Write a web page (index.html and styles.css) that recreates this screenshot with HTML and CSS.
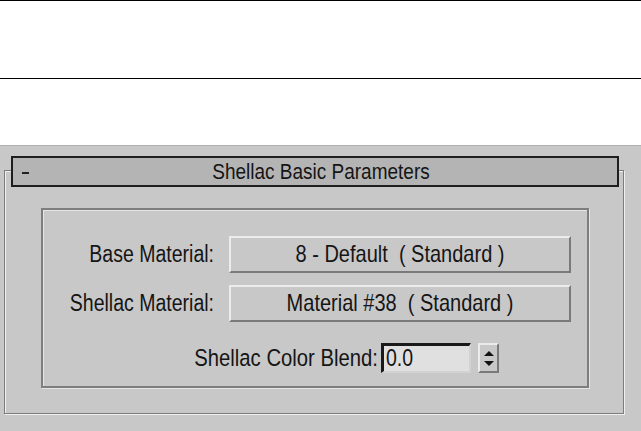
FILE: index.html
```html
<!DOCTYPE html>
<html>
<head>
<meta charset="utf-8">
<link rel="stylesheet" href="styles.css">
</head>
<body>
<div class="page">
  <div class="rule rule-top"></div>
  <div class="blank"></div>
  <div class="rule"></div>
  <div class="gap"></div>
  <div class="panel">
    <div class="rollout-head">
      <span class="minus"></span>
      <span class="title txt">Shellac Basic Parameters</span>
    </div>
    <div class="frame">
      <div class="group">
        <div class="row">
          <span class="label txt">Base Material:</span>
          <div class="btn"><span class="txt">8 - Default&nbsp; ( Standard )</span></div>
        </div>
        <div class="row row2">
          <span class="label txt">Shellac Material:</span>
          <div class="btn"><span class="txt">Material #38&nbsp; ( Standard )</span></div>
        </div>
        <div class="row row3">
          <span class="label txt">Shellac Color Blend:</span>
          <div class="field"><span class="txt">0.0</span></div>
          <div class="spinner">
            <span class="arr up"></span>
            <span class="arr down"></span>
          </div>
        </div>
      </div>
    </div>
  </div>
</div>
</body>
</html>
```

FILE: styles.css
```css
html, body {
  margin: 0;
  padding: 0;
  background: #ffffff;
}
.page {
  width: 641px;
  height: 431px;
  overflow: hidden;
  font-family: "Liberation Sans", Arial, sans-serif;
  color: #151515;
}
.txt {
  display: inline-block;
  transform: scaleY(1.18);
}
.rule {
  height: 0;
  border-top: 1px solid #000;
}
.blank { height: 77px; }
.gap { height: 66px; }
.panel {
  background: #c8c8c8;
  border-top: 1px solid #b0b0b0;
  height: 286px;
  box-sizing: border-box;
  padding: 10px 0 0 4px;
}
.rollout-head {
  position: relative;
  z-index: 1;
  margin-left: 7px;
  width: 608px;
  height: 31px;
  box-sizing: border-box;
  border: 2px solid #1e1e1e;
  background: #b4b4b4;
  display: flex;
  align-items: center;
  justify-content: center;
}
.minus {
  position: absolute;
  left: 9px;
  top: 14px;
  width: 7px;
  height: 2px;
  background: #222;
}
.title {
  font-size: 19px;
  margin-left: 12px;
}
.frame {
  margin-top: -17px;
  width: 620px;
  height: 244px;
  box-sizing: border-box;
  border: 1px solid #7c7c7c;
  box-shadow: inset 1px 1px 0 #f0f0f0, 1px 1px 0 #f0f0f0;
  padding: 37px 0 0 36px;
}
.group {
  width: 548px;
  height: 180px;
  box-sizing: border-box;
  border: 2px solid #7e7e7e;
  box-shadow: inset 1px 1px 0 #e4e4e4, 1px 1px 0 #e4e4e4;
  padding-top: 26px;
}
.row {
  display: flex;
  justify-content: flex-end;
  align-items: center;
  padding-right: 16px;
}
.row2 { margin-top: 12px; }
.row3 {
  margin-top: 21px;
  padding-right: 88px;
}
.label {
  font-size: 19.5px;
  margin-right: 15px;
}
.row3 .label {
  font-size: 20.3px;
  margin-right: 3px;
}
.btn {
  width: 342px;
  height: 37px;
  box-sizing: border-box;
  border-top: 2px solid #ececec;
  border-left: 2px solid #ececec;
  border-right: 2px solid #7a7a7a;
  border-bottom: 2px solid #7a7a7a;
  background: #c8c8c8;
  display: flex;
  align-items: center;
  justify-content: center;
  font-size: 20px;
}
.field {
  width: 90px;
  height: 30px;
  box-sizing: border-box;
  border-top: 3px solid #1a1a1a;
  border-left: 3px solid #1a1a1a;
  border-right: 2px solid #d2d2d2;
  border-bottom: 2px solid #d2d2d2;
  background: #e0e0e0;
  font-size: 19.5px;
  line-height: 25px;
  padding-left: 2px;
}
.spinner {
  margin-left: 7px;
  width: 21px;
  height: 30px;
  box-sizing: border-box;
  border-top: 2px solid #ececec;
  border-left: 2px solid #ececec;
  border-right: 2px solid #7a7a7a;
  border-bottom: 2px solid #7a7a7a;
  background: #c8c8c8;
  display: flex;
  flex-direction: column;
  align-items: center;
  justify-content: center;
  gap: 5px;
}
.arr {
  width: 0;
  height: 0;
  border-left: 5px solid transparent;
  border-right: 5px solid transparent;
}
.up { border-bottom: 5px solid #111; }
.down { border-top: 5px solid #111; }
```
